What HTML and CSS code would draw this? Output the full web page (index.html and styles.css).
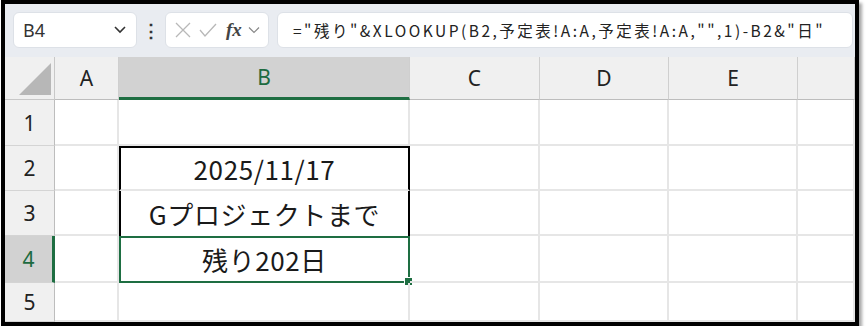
FILE: index.html
```html
<!DOCTYPE html>
<html lang="ja">
<head>
    <meta charset="UTF-8">
    <title>XLOOKUP</title>
    <link rel="stylesheet" href="styles.css">
</head>
<body>
    <div class="frame">
        <div class="toolbar">
            <div class="name-box">
                <span>B4</span>
                <svg width="14" height="10" viewBox="0 0 14 10"><polyline points="2,2 7,7 12,2" fill="none" stroke="#333" stroke-width="1.6"/></svg>
            </div>
            <div class="grip">⋮</div>
            <div class="fx-box">
                <svg width="18" height="18" viewBox="0 0 18 18"><path d="M2 2 L16 16 M16 2 L2 16" stroke="#b8b8b8" stroke-width="1.3" fill="none"/></svg>
                <svg width="20" height="18" viewBox="0 0 20 18"><polyline points="2,9 7,15 18,3" stroke="#b8b8b8" stroke-width="1.3" fill="none"/></svg>
                <span class="fx">fx</span>
                <svg width="12" height="8" viewBox="0 0 12 8"><polyline points="1,1.5 6,6.5 11,1.5" fill="none" stroke="#888" stroke-width="1.2"/></svg>
            </div>
            <div class="formula">="残り"&amp;XLOOKUP(B2,予定表!A:A,予定表!A:A,"",1)-B2&amp;"日"</div>
        </div>
        <div class="sheet">
            <div class="corner"><div class="tri"></div></div>
            <div class="col-head">A</div>
            <div class="col-head active">B</div>
            <div class="col-head">C</div>
            <div class="col-head">D</div>
            <div class="col-head">E</div>
            <div class="col-head"></div>

            <div class="row-head">1</div>
            <div class="cell"></div><div class="cell"></div><div class="cell"></div><div class="cell"></div><div class="cell"></div><div class="cell"></div>

            <div class="row-head">2</div>
            <div class="cell"></div><div class="cell range-top">2025/11/17</div><div class="cell"></div><div class="cell"></div><div class="cell"></div><div class="cell"></div>

            <div class="row-head">3</div>
            <div class="cell"></div><div class="cell range-mid">Gプロジェクトまで</div><div class="cell"></div><div class="cell"></div><div class="cell"></div><div class="cell"></div>

            <div class="row-head active">4</div>
            <div class="cell"></div><div class="cell selected">残り202日<span class="handle"></span></div><div class="cell"></div><div class="cell"></div><div class="cell"></div><div class="cell"></div>

            <div class="row-head">5</div>
            <div class="cell"></div><div class="cell"></div><div class="cell"></div><div class="cell"></div><div class="cell"></div><div class="cell"></div>
        </div>
    </div>
</body>
</html>
```

FILE: styles.css
```css
body {
    margin: 0;
    background: white;
    font-family: "Noto Sans", "Noto Sans CJK JP", sans-serif;
}
.frame {
    margin-left: 1px;
    width: 850px;
    height: 318px;
    border: 4px solid #000;
    box-shadow: 3px 3px 3px rgba(0, 0, 0, 0.35);
    display: flex;
    flex-direction: column;
    overflow: hidden;
}
.toolbar {
    height: 53px;
    box-sizing: border-box;
    padding: 8px 2px 9px 8px;
    background: #e9ecf1;
    display: flex;
    align-items: center;
}
.name-box, .fx-box, .formula {
    height: 36px;
    box-sizing: border-box;
    background: white;
    border: 1px solid #dde1e7;
    border-radius: 6px;
    display: flex;
    align-items: center;
}
.name-box {
    width: 124px;
    padding: 0 9px 0 9px;
    justify-content: space-between;
    font-size: 18px;
    color: #333;
}
.grip {
    width: 28px;
    text-align: center;
    font-size: 18px;
    font-weight: bold;
    color: #333;
}
.fx-box {
    width: 104px;
    padding: 0 4px 0 8px;
    gap: 6px;
}
.fx {
    font-family: "Liberation Serif", serif;
    font-style: italic;
    font-weight: bold;
    font-size: 19px;
    color: #444;
    margin-left: 2px;
}
.formula {
    flex: 1;
    margin-left: 8px;
    padding-left: 15px;
    font-family: "Noto Sans CJK JP", sans-serif;
    font-size: 15.5px;
    letter-spacing: 2.5px;
    color: #222;
    white-space: nowrap;
}
.sheet {
    flex: 1;
    display: grid;
    grid-template-columns: 50px 64px 291px 130px 129px 129px 1fr;
    grid-template-rows: 43px 46px 45px 45px 47px 1fr;
}
.corner {
    background: #f0f0f0;
    border-right: 1px solid #c8c8c8;
    border-bottom: 1px solid #c8c8c8;
    position: relative;
}
.tri {
    position: absolute;
    right: 3px;
    bottom: 4px;
    width: 0;
    height: 0;
    border-left: 32px solid transparent;
    border-bottom: 32px solid #b7b7b7;
}
.col-head {
    background: #f0f0f0;
    border-right: 1px solid #cfcfcf;
    border-bottom: 1px solid #bdbdbd;
    display: flex;
    align-items: center;
    justify-content: center;
    font-size: 21px;
    color: #222;
}
.col-head.active {
    background: #d2d2d2;
    color: #1d6b40;
    border-bottom: 3px solid #1e6e42;
}
.row-head {
    background: #f0f0f0;
    border-right: 1px solid #bdbdbd;
    border-bottom: 1px solid #d4d4d4;
    display: flex;
    align-items: center;
    justify-content: center;
    font-size: 21px;
    color: #222;
}
.row-head.active {
    background: #d2d2d2;
    color: #1d6b40;
    border-right: 3px solid #1e6e42;
}
.cell {
    border-right: 2px solid #e6e6e6;
    border-bottom: 2px solid #e6e6e6;
    display: flex;
    align-items: center;
    justify-content: center;
    font-family: "Noto Sans CJK JP", sans-serif;
    font-size: 26px;
    letter-spacing: 0.6px;
    color: #1a1a1a;
    position: relative;
}
.range-top {
    border: 2px solid #000;
    border-bottom: 2px solid #e6e6e6;
}
.range-mid {
    border-left: 2px solid #000;
    border-right: 2px solid #000;
    border-bottom: none;
}
.selected {
    border: 2px solid #1e6e42;
}
.handle {
    position: absolute;
    right: -5px;
    bottom: -5px;
    width: 7px;
    height: 7px;
    background: #1e6e42;
    border: 1px solid white;
}
```
